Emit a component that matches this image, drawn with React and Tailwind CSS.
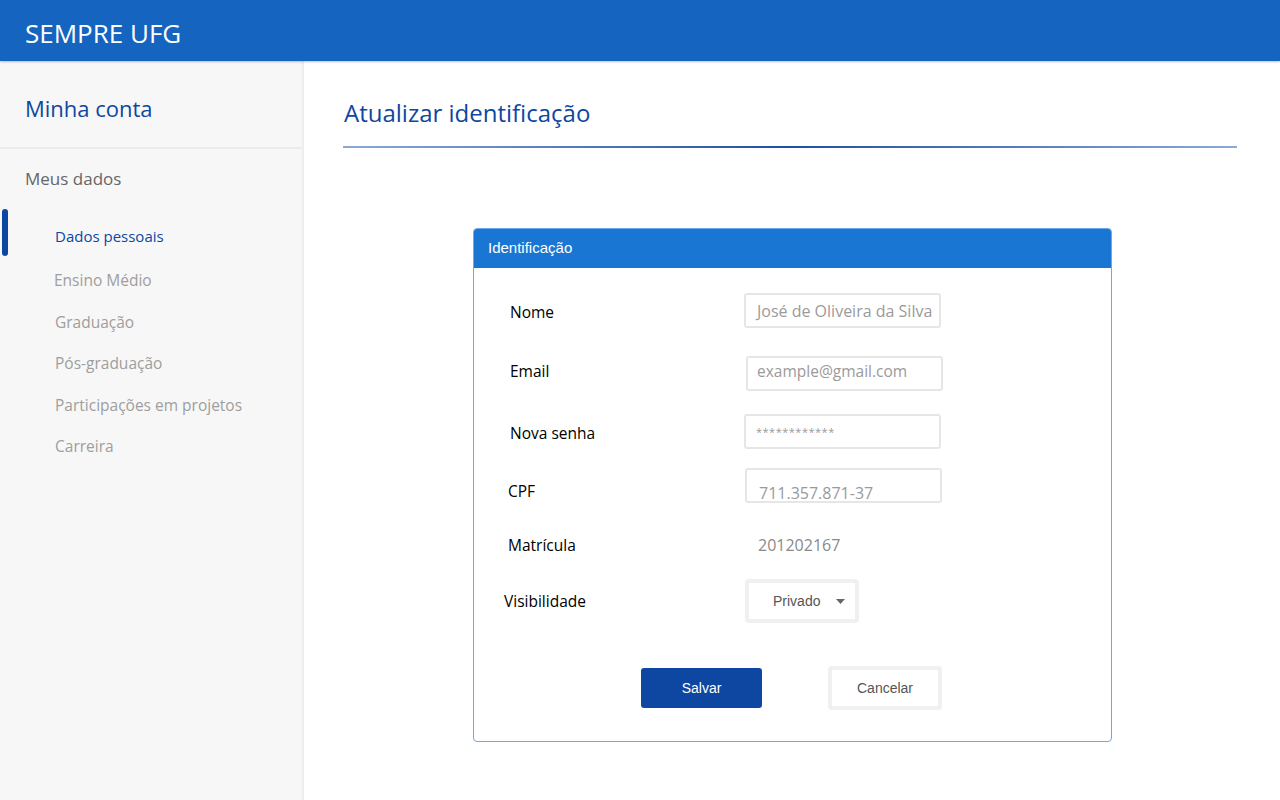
const MENU = ['Ensino Médio', 'Graduação', 'Pós-graduação', 'Participações em projetos', 'Carreira']

const UB = { fontFamily: '"Open Sans", "DejaVu Sans", sans-serif' }
const AR = { fontFamily: '"Liberation Sans", Arial, sans-serif' }

function Sidebar() {
  return (
    <aside className="w-[304px] shrink-0 bg-[#f7f7f7] border-r-2 border-[#eeeeee] min-h-[740px]" style={UB}>
      <div className="h-[88px] border-b-2 border-[#ececec] flex items-center pl-[25px] pt-[8px]">
        <span className="text-[22px] text-[#0d47a1]">Minha conta</span>
      </div>
      <div className="pt-[18px]">
        <div className="pl-[25px] text-[17px] text-[#666666] leading-[24px]">Meus dados</div>
        <div className="relative mt-[16px]">
          <div className="absolute left-[2px] top-[2px] w-[6px] h-[47px] rounded-full bg-[#0d47a1]" />
          <div className="pl-[55px] h-[53px] flex items-center pt-[6px] text-[15px] text-[#0d47a1]">Dados pessoais</div>
        </div>
        <ul className="pl-[55px] text-[15.5px] text-[#9e9e9e]">
          {MENU.map((m, i) => (
            <li key={m} className={`h-[41.5px] flex items-center ${i === 0 ? '-ml-[1px]' : ''}`}>{m}</li>
          ))}
        </ul>
      </div>
    </aside>
  )
}

function Input({ value, className = '', textClass = '' }) {
  return (
    <div className={`w-[197px] h-[35px] border-2 border-[#e6e6e6] rounded-[3px] bg-white flex items-center px-[11px] text-[16px] text-[#9a9a9a] overflow-hidden whitespace-nowrap ${className}`} style={UB}>
      <span className={textClass}>{value}</span>
    </div>
  )
}

function Row({ label, labelMt, labelMl = 0, children, mt }) {
  return (
    <div className="flex items-start" style={{ marginTop: mt }}>
      <div className="w-[234px] text-[15.5px] text-black leading-[20px]" style={{ ...UB, marginTop: labelMt, marginLeft: labelMl }}>{label}</div>
      <div style={{ marginLeft: -labelMl }}>{children}</div>
    </div>
  )
}

function Card() {
  return (
    <div className="w-[639px] border border-[#6ea8ec] rounded-[4px] overflow-hidden bg-white">
      <div className="h-[39px] bg-[#1976d2] flex items-center pl-[14px] text-[15px] text-white" style={AR}>
        Identificação
      </div>
      <div className="pl-[36px] pb-[31px]">
        <Row label="Nome" labelMt={9} mt={25}>
          <Input value="José de Oliveira da Silva" className="px-[10px]" />
        </Row>
        <Row label="Email" labelMt={5} mt={28}>
          <Input value="example@gmail.com" className="ml-[2px]" textClass="-mt-[3px] -ml-[2px] text-[15.5px]" />
        </Row>
        <Row label="Nova senha" labelMt={9} mt={23}>
          <Input value="************" className="items-start pt-[8px]" textClass="text-[11px] tracking-[0.5px] -ml-[1px]" />
        </Row>
        <Row label="CPF" labelMt={13} labelMl={-2} mt={19}>
          <Input value="711.357.871-37" className="ml-[1px]" textClass="leading-[20px] translate-y-[7px] ml-[1px]" />
        </Row>
        <Row label="Matrícula" labelMt={0} labelMl={-2} mt={32}>
          <div className="pl-[14px] text-[16px] text-[#8a8a8a] leading-[20px]" style={UB}>201202167</div>
        </Row>
        <Row label="Visibilidade" labelMt={12} labelMl={-6} mt={24}>
          <div className="ml-[1px] w-[114px] h-[44px] border-4 border-[#f0f0f0] rounded-[4px] bg-white flex items-center pl-[24px] text-[14px] text-[#555555]" style={AR}>
            <span>Privado</span>
            <svg className="ml-[16px]" width="9" height="5" viewBox="0 0 9 5"><path d="M0 0h9L4.5 5z" fill="#666666" /></svg>
          </div>
        </Row>
        <div className="flex items-center mt-[43px] pl-[131px]" style={AR}>
          <button className="w-[121px] h-[40px] rounded-[3px] bg-[#0d47a1] text-white text-[14px]">Salvar</button>
          <button className="ml-[66px] w-[114px] h-[44px] border-4 border-[#f0f0f0] rounded-[4px] bg-white text-[14px] text-[#555555]">Cancelar</button>
        </div>
      </div>
    </div>
  )
}

export default function App() {
  return (
    <div className="w-[1280px] h-[800px] overflow-hidden bg-white flex flex-col">
      <header className="h-[61px] shrink-0 bg-[#1565c0] flex items-center pl-[25px] shadow-[0_1px_2px_rgba(0,0,0,0.25)] relative z-10" style={UB}>
        <span className="text-[26px] text-white mt-[6px]">SEMPRE UFG</span>
      </header>
      <div className="flex flex-1">
        <Sidebar />
        <main className="flex-1 pl-[40px] pr-[43px]">
          <h1 className="mt-[37px] text-[24px] text-[#0d47a1] leading-[30px]" style={UB}>Atualizar identificação</h1>
          <div className="mt-[18px] -ml-[1px] h-[2px] bg-gradient-to-r from-[#8ea8d6] via-[#1e4fa2] to-[#8ea8d6]" />
          <div className="mt-[80px] pl-[129px]">
            <Card />
          </div>
        </main>
      </div>
    </div>
  )
}
